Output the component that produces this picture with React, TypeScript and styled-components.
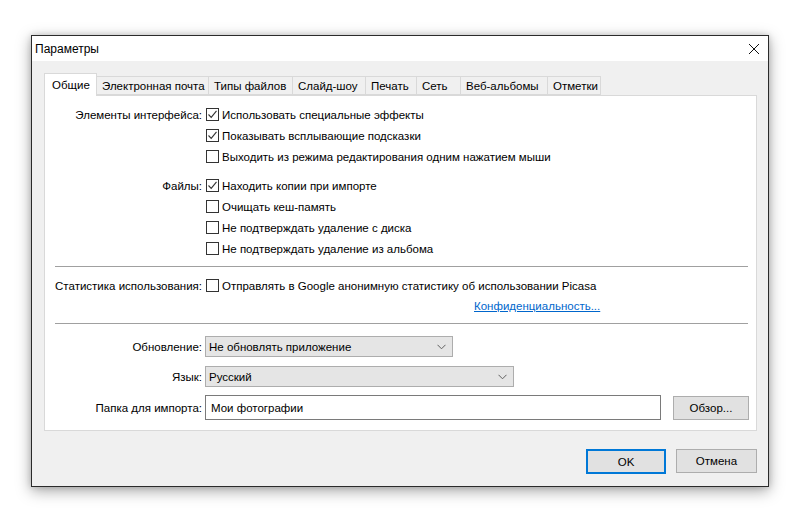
import React from 'react';
import styled, { createGlobalStyle } from 'styled-components';

const GlobalStyle = createGlobalStyle`
    html, body {
        margin: 0;
        padding: 0;
        background: #ffffff;
    }
    body {
        font-family: "Liberation Sans", Arial, sans-serif;
        font-size: 11.5px;
        color: #000;
    }
`;

const Page = styled.div`
    width: 800px;
    height: 518px;
    padding: 35px 0 0 31px;
    box-sizing: border-box;
`;

const Window = styled.div`
    width: 738px;
    height: 452px;
    box-sizing: border-box;
    border: 1px solid #2b2b2b;
    background: #f0f0f0;
    box-shadow: 0 4px 14px rgba(0, 0, 0, 0.35), 0 0 6px rgba(0, 0, 0, 0.15);
    display: flex;
    flex-direction: column;
`;

const TitleBar = styled.div`
    height: 25px;
    background: #ffffff;
    display: flex;
    align-items: center;
    justify-content: space-between;
    padding: 0 7px 0 3px;
    flex: 0 0 auto;
`;

const Title = styled.span`
    font-size: 12px;
`;

const CloseButton = styled.div`
    width: 14px;
    height: 14px;
    display: flex;
    align-items: center;
    justify-content: center;
`;

const Body = styled.div`
    flex: 1 1 auto;
    padding: 12px 11px 0 12px;
    display: flex;
    flex-direction: column;
`;

const TabStrip = styled.div`
    display: flex;
    align-items: flex-end;
    height: 22px;
    position: relative;
    z-index: 1;
`;

const Tab = styled.div<{ $active?: boolean; $width: number }>`
    box-sizing: border-box;
    width: ${(p) => p.$width}px;
    height: ${(p) => (p.$active ? 23 : 19)}px;
    margin-bottom: ${(p) => (p.$active ? -1 : 0)}px;
    padding-left: ${(p) => (p.$active ? 7 : 5)}px;
    display: flex;
    align-items: center;
    background: ${(p) => (p.$active ? '#ffffff' : '#f0f0f0')};
    border: 1px solid #d9d9d9;
    border-bottom: ${(p) => (p.$active ? 'none' : '1px solid #d9d9d9')};
    margin-left: ${(p) => (p.$active ? 0 : -1)}px;
    white-space: nowrap;
    &:first-child {
        margin-left: 0;
    }
`;

const Panel = styled.div`
    height: 336px;
    box-sizing: border-box;
    background: #ffffff;
    border: 1px solid #d9d9d9;
    padding: 8px 8px 0 10px;
    display: flex;
    flex-direction: column;
`;

const Group = styled.div<{ $gap?: number }>`
    display: grid;
    grid-template-columns: 147px 1fr;
    column-gap: 4px;
    margin-bottom: ${(p) => p.$gap ?? 0}px;
`;

const Label = styled.div`
    display: flex;
    justify-content: flex-end;
    align-items: center;
    height: 21px;
    white-space: nowrap;
`;

const Options = styled.div`
    display: flex;
    flex-direction: column;
`;

const Option = styled.label`
    display: flex;
    align-items: center;
    height: 21px;
    gap: 3px;
    white-space: nowrap;
`;

const Box = styled.span`
    width: 13px;
    height: 13px;
    box-sizing: border-box;
    border: 1px solid #333333;
    background: #ffffff;
    display: flex;
    align-items: center;
    justify-content: center;
    flex: 0 0 auto;
`;

const Separator = styled.div<{ $top: number; $bottom: number }>`
    height: 1px;
    background: #a0a0a0;
    margin: ${(p) => p.$top}px 0 ${(p) => p.$bottom}px 0;
`;

const LinkRow = styled.div`
    height: 21px;
    line-height: 21px;
    padding-left: 419px;
`;

const Link = styled.a`
    color: #0066cc;
    text-decoration: underline;
    cursor: pointer;
`;

const FieldRow = styled.div<{ $gap: number }>`
    display: flex;
    align-items: center;
    margin-bottom: ${(p) => p.$gap}px;
`;

const FieldLabel = styled.div`
    width: 147px;
    display: flex;
    justify-content: flex-end;
    margin-right: 3px;
    white-space: nowrap;
    flex: 0 0 auto;
`;

const Select = styled.div<{ $width: number }>`
    width: ${(p) => p.$width}px;
    height: 21px;
    box-sizing: border-box;
    background: #e5e5e5;
    border: 1px solid #adadad;
    display: flex;
    align-items: center;
    justify-content: space-between;
    padding: 0 6px 0 3px;
`;

const TextInput = styled.div`
    width: 456px;
    height: 25px;
    box-sizing: border-box;
    background: #ffffff;
    border: 1px solid #7a7a7a;
    display: flex;
    align-items: center;
    padding-left: 5px;
    flex: 0 0 auto;
`;

const Button = styled.div<{ $width: number; $default?: boolean }>`
    width: ${(p) => p.$width}px;
    height: ${(p) => (p.$default ? 25 : 24)}px;
    box-sizing: border-box;
    background: #e1e1e1;
    border: ${(p) => (p.$default ? '2px solid #0078d7' : '1px solid #adadad')};
    display: flex;
    align-items: center;
    justify-content: center;
    flex: 0 0 auto;
`;

const BrowseButton = styled(Button)`
    margin-left: 12px;
`;

const Footer = styled.div`
    display: flex;
    justify-content: flex-end;
    gap: 10px;
    padding: 18px 0 0 0;
`;

const tabs = [
    { title: 'Общие', width: 53 },
    { title: 'Электронная почта', width: 113 },
    { title: 'Типы файлов', width: 85 },
    { title: 'Слайд-шоу', width: 74 },
    { title: 'Печать', width: 52 },
    { title: 'Сеть', width: 45 },
    { title: 'Веб-альбомы', width: 88 },
    { title: 'Отметки', width: 54 },
];

function Check() {
    return (
        <svg width="11" height="11" viewBox="0 0 11 11">
            <polyline points="1.5,5.5 4.2,8.3 9.5,1.8" fill="none" stroke="#333333" strokeWidth="1.1" />
        </svg>
    );
}

function Checkbox({ checked, text }: { checked?: boolean; text: string }) {
    return (
        <Option>
            <Box>{checked && <Check />}</Box>
            <span>{text}</span>
        </Option>
    );
}

function Chevron() {
    return (
        <svg width="9" height="6" viewBox="0 0 9 6">
            <polyline points="0.5,0.8 4.5,4.8 8.5,0.8" fill="none" stroke="#606060" strokeWidth="1" />
        </svg>
    );
}

export default function App() {
    return (
        <>
            <GlobalStyle />
            <Page>
                <Window>
                    <TitleBar>
                        <Title>Параметры</Title>
                        <CloseButton>
                            <svg width="12" height="12" viewBox="0 0 12 12">
                                <path d="M1 1 L11 11 M11 1 L1 11" stroke="#111111" strokeWidth="1" />
                            </svg>
                        </CloseButton>
                    </TitleBar>
                    <Body>
                        <TabStrip>
                            {tabs.map((t, i) => (
                                <Tab key={t.title} $active={i === 0} $width={t.width}>
                                    {t.title}
                                </Tab>
                            ))}
                        </TabStrip>
                        <Panel>
                            <Group $gap={8}>
                                <Label>Элементы интерфейса:</Label>
                                <Options>
                                    <Checkbox checked text="Использовать специальные эффекты" />
                                    <Checkbox checked text="Показывать всплывающие подсказки" />
                                    <Checkbox text="Выходить из режима редактирования одним нажатием мыши" />
                                </Options>
                            </Group>
                            <Group>
                                <Label>Файлы:</Label>
                                <Options>
                                    <Checkbox checked text="Находить копии при импорте" />
                                    <Checkbox text="Очищать кеш-память" />
                                    <Checkbox text="Не подтверждать удаление с диска" />
                                    <Checkbox text="Не подтверждать удаление из альбома" />
                                </Options>
                            </Group>
                            <Separator $top={7} $bottom={8} />
                            <Group>
                                <Label>Статистика использования:</Label>
                                <Options>
                                    <Checkbox text="Отправлять в Google анонимную статистику об использовании Picasa" />
                                </Options>
                            </Group>
                            <LinkRow>
                                <Link>Конфиденциальность...</Link>
                            </LinkRow>
                            <Separator $top={6} $bottom={12} />
                            <FieldRow $gap={9}>
                                <FieldLabel>Обновление:</FieldLabel>
                                <Select $width={248}>
                                    <span>Не обновлять приложение</span>
                                    <Chevron />
                                </Select>
                            </FieldRow>
                            <FieldRow $gap={8}>
                                <FieldLabel>Язык:</FieldLabel>
                                <Select $width={309}>
                                    <span>Русский</span>
                                    <Chevron />
                                </Select>
                            </FieldRow>
                            <FieldRow $gap={0}>
                                <FieldLabel>Папка для импорта:</FieldLabel>
                                <TextInput>Мои фотографии</TextInput>
                                <BrowseButton $width={76}>Обзор...</BrowseButton>
                            </FieldRow>
                        </Panel>
                        <Footer>
                            <Button $width={80} $default>
                                OK
                            </Button>
                            <Button $width={81}>Отмена</Button>
                        </Footer>
                    </Body>
                </Window>
            </Page>
        </>
    );
}
